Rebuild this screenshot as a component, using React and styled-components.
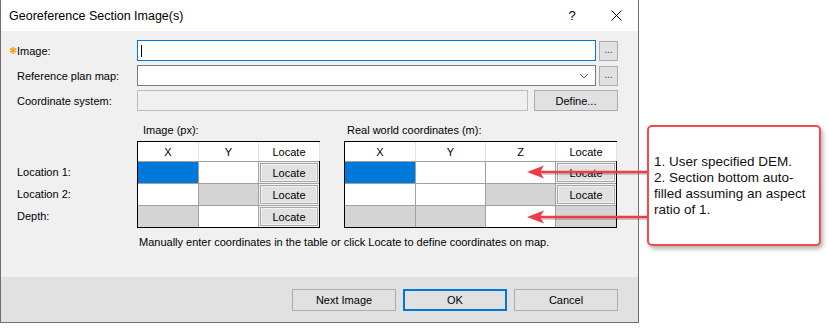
import React from 'react';
import styled, { createGlobalStyle } from 'styled-components';

const GlobalStyle = createGlobalStyle`
  html, body {
    margin: 0;
    padding: 0;
    background: #fff;
  }
  body {
    font-family: "Liberation Sans", Arial, sans-serif;
    font-size: 11px;
    color: #000;
  }
`;

const Page = styled.div`
  position: relative;
  width: 828px;
  height: 328px;
  display: flex;
  align-items: flex-start;
  background: #fff;
  overflow: hidden;
`;

const Dialog = styled.div`
  width: 639px;
  height: 323px;
  box-sizing: border-box;
  border: 1px solid #6f6f6f;
  border-top: none;
  display: flex;
  flex-direction: column;
  background: #f0f0f0;
`;

const TitleBar = styled.div`
  height: 31px;
  flex: none;
  display: flex;
  align-items: center;
  padding-left: 8px;
  background: #fff;
  font-size: 12.5px;
`;

const Title = styled.span`
  flex: 1;
`;

const TitleButton = styled.span`
  width: 44px;
  height: 31px;
  display: flex;
  align-items: center;
  justify-content: center;
  font-size: 13px;
`;

const Body = styled.div`
  flex: 1;
  display: flex;
  flex-direction: column;
  padding: 9px 20px 0 8px;
`;

const FormRow = styled.div`
  display: grid;
  grid-template-columns: ${(p) => (p.$wide ? '122px 1fr 84px' : '125px 1fr 19px')};
  column-gap: ${(p) => (p.$wide ? '6px' : '3px')};
  height: 21px;
  margin-bottom: 4px;
`;

const Label = styled.div`
  display: flex;
  align-items: center;
`;

const Marker = styled.span`
  width: 8px;
  flex: none;
  color: #f5a623;
  font-size: 10px;
  line-height: 1;
`;

const Input = styled.div`
  box-sizing: border-box;
  display: flex;
  align-items: center;
  justify-content: flex-end;
  padding: 0 6px 0 3px;
  border: 1px solid ${(p) => (p.$focused ? '#0078d7' : p.$disabled ? '#bcbcbc' : '#7a7a7a')};
  background: ${(p) => (p.$disabled ? '#f0f0f0' : '#fff')};
`;

const Caret = styled.span`
  width: 1px;
  height: 12px;
  background: #000;
  margin-right: auto;
`;

const Button = styled.div`
  box-sizing: border-box;
  display: flex;
  align-items: center;
  justify-content: center;
  border: 1px solid #adadad;
  background: #e1e1e1;
`;

const SmallButton = styled(Button)`
  height: 20px;
  align-self: center;
  color: #1e3c78;
  font-size: 10px;
  padding-bottom: 3px;
`;

const TablesArea = styled.div`
  display: flex;
  margin-top: 7px;
`;

const LabelColumn = styled.div`
  width: 128px;
  flex: none;
  padding-top: 39px;
`;

const RowLabel = styled.div`
  height: 22px;
  line-height: 22px;
  padding-left: 8px;
`;

const TableBlock = styled.div`
  display: flex;
  flex-direction: column;
  margin-right: ${(p) => p.$gap || 0}px;
`;

const Caption = styled.div`
  height: 16px;
  line-height: 16px;
  margin-bottom: 3px;
  padding-left: ${(p) => p.$indent}px;
`;

const Grid = styled.div`
  display: grid;
  grid-template-columns: ${(p) => p.$cols};
  grid-template-rows: 19px 21px 21px 21px;
  gap: 1px;
  background: #a0a0a0;
  border: 1px solid #000;
`;

const Cell = styled.div`
  display: flex;
  align-items: center;
  justify-content: center;
  box-sizing: border-box;
  background: ${(p) =>
    p.$tone === 'blue' ? '#0078d7' : p.$tone === 'gray' ? '#d4d4d4' : p.$tone === 'light' ? '#f4f4f4' : '#fff'};
  padding: ${(p) => (p.$tone === 'light' ? '1px' : '0')};
`;

const HeaderCell = styled(Cell)`
  box-shadow: 1px 0 0 #e4e4e4;
`;

const LocateButton = styled(Button)`
  width: 100%;
  height: 100%;
  border-color: #a6a6a6;
  box-shadow: inset 0 0 0 1px #f2f2f2;
`;

const Note = styled.div`
  margin: 6px 0 0 130px;
  line-height: 16px;
`;

const Footer = styled.div`
  height: 45px;
  flex: none;
  box-sizing: border-box;
  display: flex;
  justify-content: flex-end;
  align-items: flex-start;
  gap: 7px;
  padding: 12px 20px 0 0;
  background: #e1e1e1;
`;

const FooterButton = styled(Button)`
  width: 104px;
  height: 22px;
  border: ${(p) => (p.$primary ? '2px solid #0078d7' : '1px solid #adadad')};
`;

const Callout = styled.div`
  position: absolute;
  left: 647px;
  top: 125px;
  width: 174px;
  height: 121px;
  box-sizing: border-box;
  display: flex;
  align-items: center;
  padding: 0 5px;
  border: 2px solid #f04a52;
  border-radius: 5px;
  background: #fff;
  box-shadow: 2px 3px 4px rgba(0, 0, 0, 0.3);
  font-family: "Liberation Sans", Arial, sans-serif;
  font-size: 13.5px;
  line-height: 16px;
  white-space: nowrap;
  color: #111;
`;

const ArrowLayer = styled.svg`
  position: absolute;
  left: 0;
  top: 0;
  pointer-events: none;
`;

const Chevron = () => (
  <svg width="10" height="6" viewBox="0 0 10 6">
    <polyline points="1,1 5,5 9,1" fill="none" stroke="#606060" strokeWidth="1" />
  </svg>
);

const CloseIcon = () => (
  <svg width="11" height="11" viewBox="0 0 11 11">
    <path d="M0.5 0.5 L10.5 10.5 M10.5 0.5 L0.5 10.5" stroke="#000" strokeWidth="1" />
  </svg>
);

const Arrow = ({ y, tip, from }) => (
  <g>
    <line x1={from} y1={y + 2} x2={tip + 12} y2={y + 2} stroke="rgba(0,0,0,0.18)" strokeWidth="2" />
    <line x1={from} y1={y} x2={tip + 10} y2={y} stroke="#ee3d48" strokeWidth="2.5" />
    <path d={`M${tip} ${y} L${tip + 17} ${y - 6.5} L${tip + 13} ${y} L${tip + 17} ${y + 6.5} Z`} fill="#ee3d48" />
  </g>
);

const imageRows = [
  ['blue', 'white'],
  ['white', 'gray'],
  ['gray', 'white'],
];

const worldRows = [
  ['blue', 'white', 'white', true],
  ['white', 'white', 'gray', true],
  ['gray', 'gray', 'white', false],
];

export default function App() {
  return (
    <>
      <GlobalStyle />
      <Page>
        <Dialog>
          <TitleBar>
            <Title>Georeference Section Image(s)</Title>
            <TitleButton>?</TitleButton>
            <TitleButton>
              <CloseIcon />
            </TitleButton>
          </TitleBar>
          <Body>
            <FormRow>
              <Label>
                <Marker>✱</Marker>Image:
              </Label>
              <Input $focused>
                <Caret />
              </Input>
              <SmallButton>...</SmallButton>
            </FormRow>
            <FormRow>
              <Label>
                <Marker />Reference plan map:
              </Label>
              <Input>
                <Chevron />
              </Input>
              <SmallButton>...</SmallButton>
            </FormRow>
            <FormRow $wide>
              <Label>
                <Marker />Coordinate system:
              </Label>
              <Input $disabled />
              <Button>Define...</Button>
            </FormRow>

            <TablesArea>
              <LabelColumn>
                <RowLabel>Location 1:</RowLabel>
                <RowLabel>Location 2:</RowLabel>
                <RowLabel>Depth:</RowLabel>
              </LabelColumn>
              <TableBlock $gap={24}>
                <Caption $indent={6}>Image (px):</Caption>
                <Grid $cols="60px 59px 60px">
                  <HeaderCell>X</HeaderCell>
                  <HeaderCell>Y</HeaderCell>
                  <HeaderCell>Locate</HeaderCell>
                  {imageRows.map((row, i) => (
                    <React.Fragment key={i}>
                      <Cell $tone={row[0]} />
                      <Cell $tone={row[1]} />
                      <Cell $tone="light">
                        <LocateButton>Locate</LocateButton>
                      </Cell>
                    </React.Fragment>
                  ))}
                </Grid>
              </TableBlock>
              <TableBlock>
                <Caption $indent={3}>Real world coordinates (m):</Caption>
                <Grid $cols="70px 69px 69px 60px">
                  <HeaderCell>X</HeaderCell>
                  <HeaderCell>Y</HeaderCell>
                  <HeaderCell>Z</HeaderCell>
                  <HeaderCell>Locate</HeaderCell>
                  {worldRows.map((row, i) => (
                    <React.Fragment key={i}>
                      <Cell $tone={row[0]} />
                      <Cell $tone={row[1]} />
                      <Cell $tone={row[2]} />
                      {row[3] ? (
                        <Cell $tone="light">
                          <LocateButton>Locate</LocateButton>
                        </Cell>
                      ) : (
                        <Cell $tone="gray" />
                      )}
                    </React.Fragment>
                  ))}
                </Grid>
              </TableBlock>
            </TablesArea>
            <Note>Manually enter coordinates in the table or click Locate to define coordinates on map.</Note>
          </Body>
          <Footer>
            <FooterButton>Next Image</FooterButton>
            <FooterButton $primary>OK</FooterButton>
            <FooterButton>Cancel</FooterButton>
          </Footer>
        </Dialog>

        <ArrowLayer width="828" height="328">
          <Arrow y={172} tip={527} from={648} />
          <Arrow y={217} tip={527} from={648} />
        </ArrowLayer>
        <Callout>
          <div>
            1. User specified DEM.
            <br />
            2. Section bottom auto-
            <br />
            filled assuming an aspect
            <br />
            ratio of 1.
          </div>
        </Callout>
      </Page>
    </>
  );
}
